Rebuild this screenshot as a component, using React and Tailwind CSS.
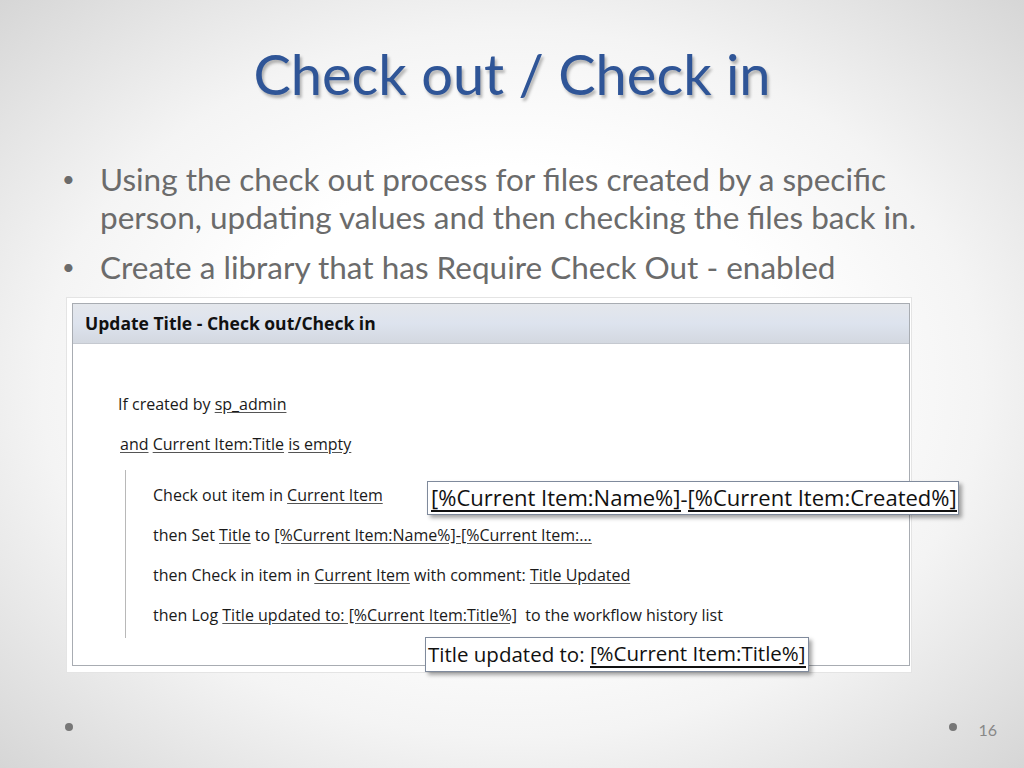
import React from "react";

const ui = { fontFamily: '"Open Sans", "Noto Sans", sans-serif' };

function L({ children }) {
  return <span className="underline decoration-[#555] underline-offset-2">{children}</span>;
}

export default function App() {
  return (
    <div
      className="relative w-[1024px] h-[768px] overflow-hidden bg-[radial-gradient(ellipse_at_center,#ffffff_40%,#f4f4f4_65%,#d6d6d6_100%)]"
      style={{ fontFamily: '"Lato", "Liberation Sans", sans-serif' }}
    >
      <div className="flex flex-col h-full">
        <h1 className="pt-[38px] h-[160px] text-center text-[56px] leading-[72px] text-[#2f5597] [text-shadow:2px_3px_3px_rgba(0,0,0,0.28)]">
          Check out / Check in
        </h1>

        <div className="pl-[60px] pr-[10px] text-[31.5px] leading-[38px] text-[#6b6b6b]">
          <div className="flex">
            <span className="w-[40px] shrink-0 text-[22px] pl-[2px]">•</span>
            <span>
              Using the check out process for files created by a specific
              <br />
              person, updating values and then checking the files back in.
            </span>
          </div>
          <div className="flex mt-[12px]">
            <span className="w-[40px] shrink-0 text-[22px] pl-[2px]">•</span>
            <span>Create a library that has Require Check Out - enabled</span>
          </div>
        </div>

        <div className="ml-[66px] mt-[11px] w-[846px] h-[376px] bg-white border border-[#e4e4e4] p-[5px] pr-[1px] pb-[6px]">
          <div className="relative h-full border border-[#a8acb2] bg-white" style={ui}>
            <div className="h-[40px] flex items-center px-[12px] text-[17.5px] font-bold text-[#111] bg-[linear-gradient(#e4e7ec,#dde3ee_50%,#d3d8e0)] border-b border-[#c5c9d0]">
              Update Title - Check out/Check in
            </div>
            <div className="pl-[45px] pt-[50px] text-[16px] text-[#1a1a1a]">
              <div className="h-[40px] leading-[20px]">
                If created by <L>sp_admin</L>
              </div>
              <div className="h-[36px] leading-[20px] pl-[2px]">
                <L>and</L> <L>Current Item:Title</L> <L>is empty</L>
              </div>
              <div className="ml-[7px] border-l border-[#b8b8b8] pl-[27px] pt-[15px] pb-[13px]">
                <div className="h-[40px] leading-[20px]">
                  Check out item in <L>Current Item</L>
                </div>
                <div className="h-[40px] leading-[20px]">
                  then Set <L>Title</L> to <L>[%Current Item:Name%]-[%Current Item:...</L>
                </div>
                <div className="h-[40px] leading-[20px]">
                  then Check in item in <L>Current Item</L> with comment: <L>Title Updated</L>
                </div>
                <div className="h-[20px] leading-[20px]">
                  then Log <L>Title updated to: [%Current Item:Title%]</L>&nbsp; to the workflow history list
                </div>
              </div>
            </div>

            <div className="absolute left-[354px] top-[177px] h-[34px] w-[532px] flex items-center pl-[3px] bg-white border border-[#7f8a9c] shadow-[3px_3px_4px_rgba(0,0,0,0.35)] text-[22px] text-[#111] whitespace-nowrap">
              <span className="border-b-2 border-[#111] leading-[25px]">[%Current Item:Name%]</span>
              <span>-</span>
              <span className="border-b-2 border-[#111] leading-[25px]">[%Current Item:Created%]</span>
            </div>

            <div className="absolute left-[352px] top-[333px] h-[35px] w-[384px] flex items-center pl-[2px] bg-white border border-[#7f8a9c] shadow-[3px_3px_4px_rgba(0,0,0,0.35)] text-[20.5px] text-[#111] whitespace-nowrap">
              <span>Title updated to:&nbsp;</span>
              <span className="border-b-2 border-[#111] leading-[25px]">[%Current Item:Title%]</span>
            </div>
          </div>
        </div>

        <div className="mt-auto h-[72px] flex items-start pt-[27px] pl-[65px] pr-[27px]">
          <span className="w-[8px] h-[8px] rounded-full bg-[#777]"></span>
          <span className="ml-auto mt-0 w-[8px] h-[8px] rounded-full bg-[#777]"></span>
          <span className="ml-[21px] -mt-[5px] text-[16px] text-[#888]">16</span>
        </div>
      </div>
    </div>
  );
}
